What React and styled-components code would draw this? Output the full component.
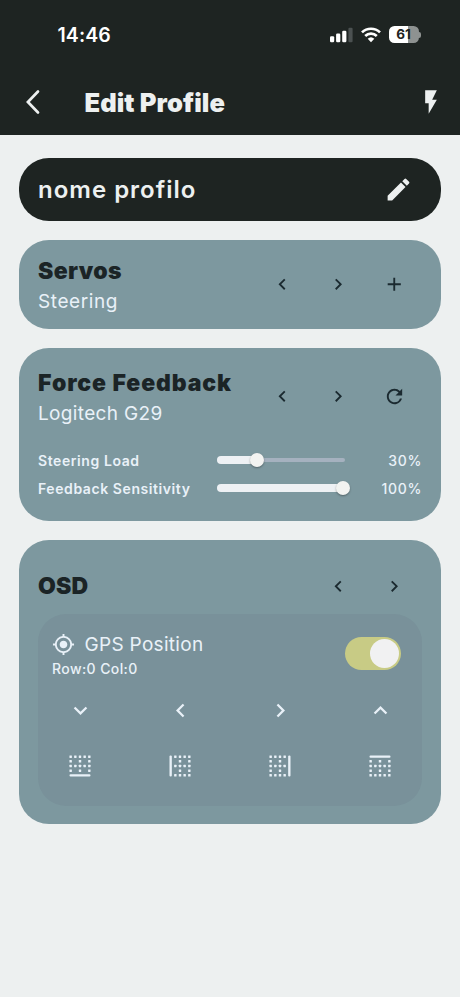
import React, { useState } from 'react'
import styled, { createGlobalStyle } from 'styled-components'
import {
  MdAdd,
  MdChevronLeft,
  MdChevronRight,
  MdEdit,
  MdExpandLess,
  MdExpandMore,
  MdFlashOn,
  MdGpsFixed,
  MdRefresh,
} from 'react-icons/md'

const sliders = [
  { label: 'Steering Load', value: 30 },
  { label: 'Feedback Sensitivity', value: 100 },
]

const StatusBar = () => (
  <Status>
    <Clock>14:46</Clock>
    <StatusIcons>
      <svg width="24" height="18" viewBox="0 0 24 18">
        <rect x="0" y="10.2" width="4.2" height="6" rx="1.2" fill="#fff" />
        <rect x="6.1" y="7.5" width="4.2" height="8.7" rx="1.2" fill="#fff" />
        <rect x="12.2" y="4.7" width="4.2" height="11.5" rx="1.2" fill="#fff" />
        <rect x="18.4" y="1.7" width="4.2" height="14.5" rx="1.2" fill="#4b5151" />
      </svg>
      <svg width="20" height="16" viewBox="0 0 20 16">
        <g fill="none" stroke="#fff" strokeWidth="2.7">
          <path d="M1 5.4a12.9 12.9 0 0 1 18 0" />
          <path d="M4.2 9a8.4 8.4 0 0 1 11.6 0" />
        </g>
        <path d="M10 15.3l-3.3-3.6a4.9 4.9 0 0 1 6.6 0z" fill="#fff" />
      </svg>
      <Battery>61</Battery>
    </StatusIcons>
  </Status>
)

// grid of dots with one solid side
const BorderIcon = ({ side }) => {
  const dots = []
  const pos = [4, 8, 12, 16, 20]
  pos.forEach((y) => {
    pos.forEach((x) => {
      if (side === 'bottom' && y === 20) return
      if (side === 'top' && y === 4) return
      if (side === 'left' && x === 4) return
      if (side === 'right' && x === 20) return
      const onLine = [4, 12, 20].includes(x) || [4, 12, 20].includes(y)
      if (onLine) dots.push([x, y])
    })
  })
  const bars = {
    bottom: [3, 19, 18, 2],
    top: [3, 3, 18, 2],
    left: [3, 3, 2, 18],
    right: [19, 3, 2, 18],
  }
  const [x, y, w, h] = bars[side]

  return (
    <svg width="28" height="28" viewBox="0 0 24 24" fill="currentColor">
      {dots.map(([cx, cy]) => (
        <rect key={`${cx}-${cy}`} x={cx - 1.05} y={cy - 1.05} width="2.1" height="2.1" rx="0.3" />
      ))}
      <rect x={x} y={y} width={w} height={h} rx="0.9" />
    </svg>
  )
}

const Slider = ({ label, value }) => (
  <SliderRow>
    <SliderLabel>{label}</SliderLabel>
    <Track>
      <Fill style={{ width: `${2.6 + 1.231 * value}px` }} />
      <Thumb style={{ left: `${2.6 + 1.231 * value}px` }} />
    </Track>
    <Percent>{value}%</Percent>
  </SliderRow>
)

const App = () => {
  const [gps, setGps] = useState(true)

  return (
    <>
      <GlobalStyle />
      <Screen>
        <Header>
          <StatusBar />
          <TitleBar>
            <BackButton type="button" aria-label="back">
              <svg width="16" height="26" viewBox="0 0 16 26">
                <path
                  d="M13 2.5L2.9 13L13 23.5"
                  fill="none"
                  stroke="currentColor"
                  strokeWidth="2.7"
                  strokeLinecap="round"
                />
              </svg>
            </BackButton>
            <Title>Edit Profile</Title>
            <MdFlashOn size={28} />
          </TitleBar>
        </Header>

        <Content>
          <NameField>
            <Name>nome profilo</Name>
            <IconButton type="button" aria-label="edit">
              <MdEdit size={29} />
            </IconButton>
          </NameField>

          <Card $pad="16px 19px 16.5px">
            <CardHeader>
              <Labels>
                <Heading $track={0.4}>Servos</Heading>
                <Subtitle $track={0.6}>Steering</Subtitle>
              </Labels>
              <Actions>
                <IconButton type="button"><MdChevronLeft size={22.5} /></IconButton>
                <IconButton type="button"><MdChevronRight size={22.5} /></IconButton>
                <IconButton type="button"><MdAdd size={22.5} /></IconButton>
              </Actions>
            </CardHeader>
          </Card>

          <Card $pad="20.5px 19px 18.5px">
            <CardHeader>
              <Labels>
                <Heading $track={0.9}>Force Feedback</Heading>
                <Subtitle $track={0.35}>Logitech G29</Subtitle>
              </Labels>
              <Actions>
                <IconButton type="button"><MdChevronLeft size={22.5} /></IconButton>
                <IconButton type="button"><MdChevronRight size={22.5} /></IconButton>
                <IconButton type="button"><MdRefresh size={23} /></IconButton>
              </Actions>
            </CardHeader>
            <Sliders>
              {sliders.map((item) => (
                <Slider key={item.label} {...item} />
              ))}
            </Sliders>
          </Card>

          <Card $pad="18.5px 19px 18.5px">
            <CardHeader>
              <Heading $track={0.2}>OSD</Heading>
              <Actions>
                <IconButton type="button"><MdChevronLeft size={22.5} /></IconButton>
                <IconButton type="button"><MdChevronRight size={22.5} /></IconButton>
              </Actions>
            </CardHeader>
            <Panel>
              <PanelHeader>
                <div>
                  <PanelTitle>
                    <MdGpsFixed size={23} />
                    <Subtitle as="h3" $track={0.3}>GPS Position</Subtitle>
                  </PanelTitle>
                  <Coords>Row:0 Col:0</Coords>
                </div>
                <Switch
                  type="button"
                  role="switch"
                  aria-checked={gps}
                  $on={gps}
                  onClick={() => setGps(!gps)}
                >
                  <Knob />
                </Switch>
              </PanelHeader>
              <Pad>
                <IconButton type="button"><MdExpandMore size={27} /></IconButton>
                <IconButton type="button"><MdChevronLeft size={27} /></IconButton>
                <IconButton type="button"><MdChevronRight size={27} /></IconButton>
                <IconButton type="button"><MdExpandLess size={27} /></IconButton>
                <IconButton type="button"><BorderIcon side="bottom" /></IconButton>
                <IconButton type="button"><BorderIcon side="left" /></IconButton>
                <IconButton type="button"><BorderIcon side="right" /></IconButton>
                <IconButton type="button"><BorderIcon side="top" /></IconButton>
              </Pad>
            </Panel>
          </Card>
        </Content>
      </Screen>
    </>
  )
}

const GlobalStyle = createGlobalStyle`
  * {
    box-sizing: border-box;
    margin: 0;
    padding: 0;
  }
  body {
    background: #edf0f0;
    font-family: Inter, "Open Sans", sans-serif;
  }
  button {
    background: transparent;
    border: none;
    color: inherit;
    font: inherit;
    cursor: pointer;
  }
  svg {
    display: block;
    flex-shrink: 0;
  }
`

const Screen = styled.div`
  width: 460px;
  min-height: 997px;
  background: #edf0f0;
`

const Header = styled.header`
  height: 134.5px;
  background: #1e2422;
  color: #edf0f0;
`

const Status = styled.div`
  display: flex;
  justify-content: space-between;
  align-items: center;
  height: 69px;
  padding: 0 39.5px 0 57.5px;
`

const Clock = styled.span`
  color: #fff;
  font-size: 19.5px;
  font-weight: 600;
  letter-spacing: 0.1px;
`

const StatusIcons = styled.div`
  display: flex;
  align-items: center;
  gap: 7.5px;
`

const Battery = styled.div`
  position: relative;
  width: 30px;
  height: 17px;
  margin-right: 2px;
  border-radius: 5.5px;
  background: linear-gradient(90deg, #fff 62%, #8e9291 62%);
  color: #1e2422;
  font-size: 13.5px;
  font-weight: 700;
  line-height: 17px;
  text-align: center;

  &::after {
    content: '';
    position: absolute;
    top: 5.5px;
    right: -2.5px;
    width: 2px;
    height: 6px;
    border-radius: 0 2px 2px 0;
    background: #8e9291;
  }
`

const TitleBar = styled.div`
  display: flex;
  align-items: center;
  height: 66px;
  padding: 0 15px 0 25px;
`

const BackButton = styled.button`
  width: 59.5px;
`

const Title = styled.h1`
  flex: 1;
  font-size: 25.5px;
  font-weight: 900;
  letter-spacing: 0.08px;
  white-space: nowrap;
`

const Content = styled.main`
  display: flex;
  flex-direction: column;
  gap: 19.25px;
  padding: 23.5px 19px 0;
`

const NameField = styled.div`
  display: flex;
  align-items: center;
  justify-content: space-between;
  height: 63px;
  padding: 0 15px 0 19px;
  border-radius: 30px;
  background: #1e2422;
  color: #edf0f0;
`

const Name = styled.span`
  font-size: 24px;
  font-weight: 600;
  letter-spacing: 1px;
`

const Card = styled.section`
  padding: ${({ $pad }) => $pad};
  border-radius: 30px;
  background: #7d989f;
  color: #e9f1f8;
`

const CardHeader = styled.div`
  display: flex;
  align-items: center;
  justify-content: space-between;
  height: 56px;
`

const Labels = styled.div`
  padding-top: 4px;
`

const Heading = styled.h2`
  color: #1b2426;
  font-size: 23px;
  font-weight: 900;
  line-height: 31px;
  letter-spacing: ${({ $track }) => $track}px;
  white-space: nowrap;
`

const Subtitle = styled.p`
  font-size: 19px;
  font-weight: 400;
  line-height: 30px;
  letter-spacing: ${({ $track }) => $track}px;
  white-space: nowrap;
`

const Actions = styled.div`
  display: flex;
  color: #1b2a30;
`

const IconButton = styled.button`
  display: flex;
  align-items: center;
  justify-content: center;
  width: 56px;
  height: 56px;
`

const Sliders = styled.div`
  padding-top: 21.5px;
`

const SliderRow = styled.div`
  display: grid;
  grid-template-columns: 179px 128px 1fr;
  align-items: center;
  height: 28px;
`

const SliderLabel = styled.span`
  font-size: 14px;
  font-weight: 600;
  letter-spacing: 0.58px;
  white-space: nowrap;
`

const Track = styled.div`
  position: relative;
  display: flex;
  align-items: center;
  height: 7.5px;

  &::before {
    content: '';
    position: absolute;
    width: 100%;
    height: 4.5px;
    border-radius: 3px;
    background: #a5b1bf;
  }
`

const Fill = styled.div`
  position: relative;
  height: 7.5px;
  border-radius: 4px;
  background: #eef1f4;
`

const Thumb = styled.div`
  position: absolute;
  width: 14px;
  height: 14px;
  border-radius: 50%;
  transform: translateX(-50%);
  background: #f2f3f1;
  box-shadow: 0 1px 2px rgba(0, 0, 0, 0.35);
`

const Percent = styled.span`
  font-size: 14px;
  font-weight: 500;
  letter-spacing: 0.7px;
  text-align: right;
`

const Panel = styled.div`
  height: 191.5px;
  padding: 15.5px 14px 0;
  border-radius: 28px;
  background: #79919a;
`

const PanelHeader = styled.div`
  display: flex;
  align-items: flex-start;
  justify-content: space-between;
  height: 52.5px;
  padding-right: 7px;
`

const PanelTitle = styled.div`
  display: flex;
  align-items: center;
  gap: 9.5px;
`

const Coords = styled.p`
  font-size: 14px;
  font-weight: 500;
  line-height: 17px;
  letter-spacing: 0.4px;
`

const Switch = styled.button`
  display: flex;
  align-items: center;
  justify-content: ${({ $on }) => ($on ? 'flex-end' : 'flex-start')};
  width: 56.5px;
  height: 33.5px;
  margin-top: 7px;
  padding: 0 2px;
  border-radius: 17px;
  background: ${({ $on }) => ($on ? '#c8cb85' : '#a5b1bf')};
`

const Knob = styled.span`
  width: 29px;
  height: 29px;
  border-radius: 50%;
  background: #f1f1f2;
`

const Pad = styled.div`
  display: grid;
  grid-template-columns: repeat(4, 56px);
  justify-content: space-between;
`

export default App
